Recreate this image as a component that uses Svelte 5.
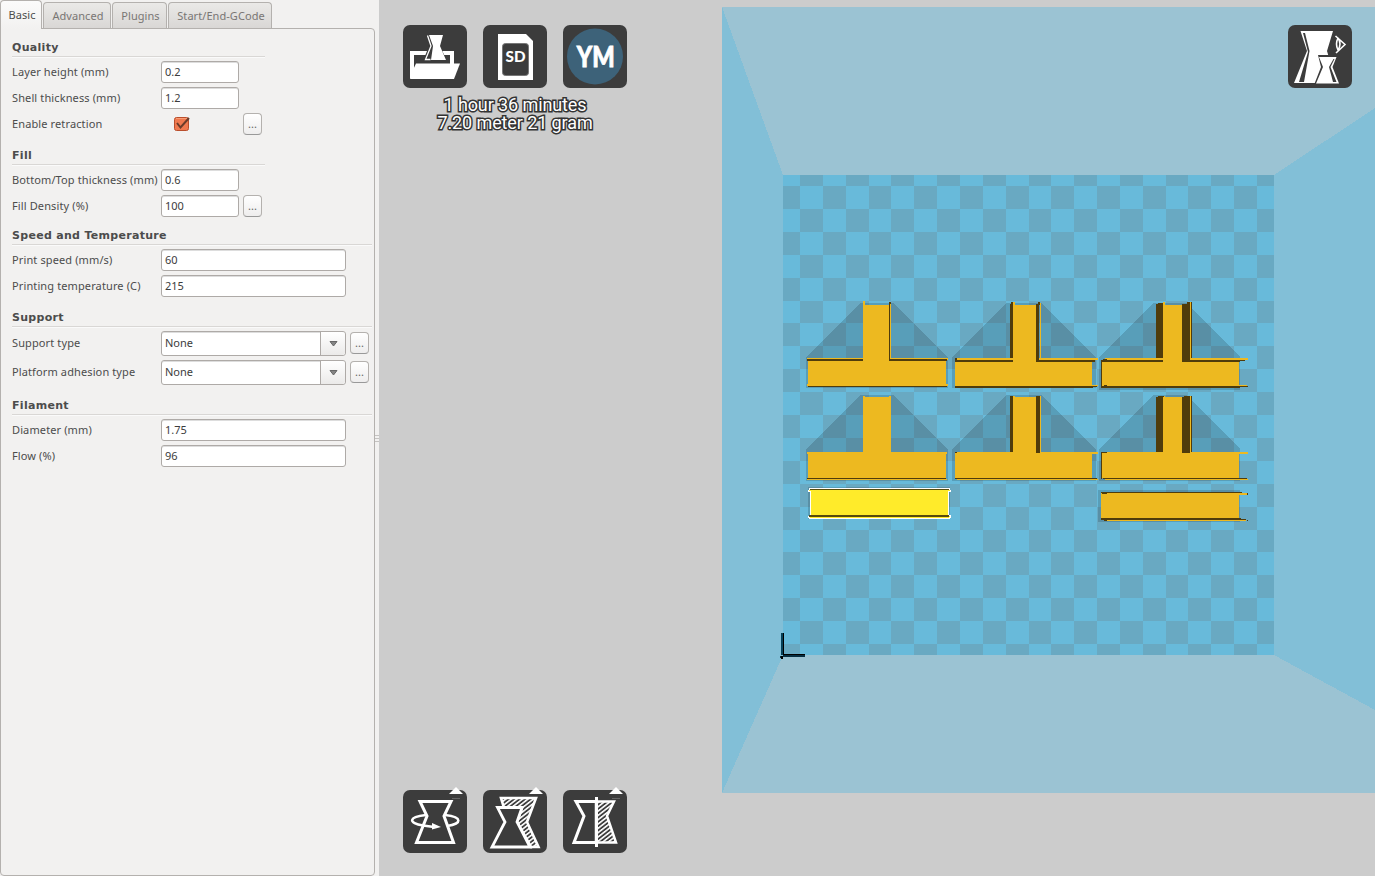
<script>
  const tabs = ['Basic', 'Advanced', 'Plugins', 'Start/End-GCode'];
  const sections = [
    { title: 'Quality', narrow: true, rows: [
      { label: 'Layer height (mm)', value: '0.2', small: true },
      { label: 'Shell thickness (mm)', value: '1.2', small: true },
      { label: 'Enable retraction', check: true, more: true } ] },
    { title: 'Fill', narrow: true, rows: [
      { label: 'Bottom/Top thickness (mm)', value: '0.6', small: true },
      { label: 'Fill Density (%)', value: '100', small: true, more: true } ] },
    { title: 'Speed and Temperature', tight: true, rows: [
      { label: 'Print speed (mm/s)', value: '60' },
      { label: 'Printing temperature (C)', value: '215' } ] },
    { title: 'Support', rows: [
      { label: 'Support type', value: 'None', select: true, more: true },
      { label: 'Platform adhesion type', value: 'None', select: true, more: true } ] },
    { title: 'Filament', rows: [
      { label: 'Diameter (mm)', value: '1.75' },
      { label: 'Flow (%)', value: '96' } ] }
  ];

  // Platform checkerboard: partial cells along every edge
  const xs = [783];
  const ys = [175];
  for (let i = 0; i <= 20; i++) {
    xs.push(Math.round(800 + i * 22.85));
    ys.push(Math.round(186 + i * 22.9));
  }
  xs.push(1274);
  ys.push(655);
  const cells = [];
  for (let r = 0; r < ys.length - 1; r++)
    for (let c = 0; c < xs.length - 1; c++)
      if ((r + c) % 2) cells.push([xs[c], ys[r], xs[c + 1] - xs[c], ys[r + 1] - ys[r]]);

  const O = '#edb920';
  const D = '#503c0b';
  const shadows = [
    '806,357 860,303 893,303 948,357 948,388 806,388',
    '952,357 1006,303 1041,303 1096,357 1096,388 952,388',
    '1099,357 1153,303 1186,303 1240,357 1240,390 1099,390',
    '806,449 860,395 893,395 948,449 948,481 806,481',
    '952,449 1006,395 1041,395 1096,449 1096,481 952,481',
    '1099,449 1153,395 1186,395 1240,449 1240,481 1099,481',
    '1098,490 1240,490 1240,522 1098,522',
    '808,487 950,487 950,519 808,519'
  ];
  const parts = [
    // upper left
    [807,358,141,2,O],[807,359,140,2,D],[808,361,138,25,O],[807,384,141,2,O],[808,386,139,1,D],
    [863,301,2,58,O],[863,305,26,56,O],[865,360,24,2,O],[889,302,1,57,D],[890,302,1,56,D],[890,304,1,54,O],
    // upper middle
    [957,358,141,1,O],[955,358,2,2,D],[957,359,141,1,O],[955,360,140,2,D],[955,362,137,24,O],[957,385,141,1,O],[955,386,138,2,D],[1092,386,5,1,D],
    [1010,304,3,54,D],[1011,302,2,2,D],[1013,302,2,56,O],[1013,305,23,58,O],[1036,304,3,58,D],[1038,302,2,3,D],[1040,303,1,56,O],
    // upper right
    [1105,358,143,2,O],[1103,359,4,1,D],[1101,360,144,1,D],[1101,361,139,1,D],[1101,361,1,26,D],[1102,362,137,24,O],[1104,385,143,1,O],[1104,385,3,1,D],[1101,386,147,1,D],[1101,387,139,1,D],
    [1156,304,7,54,D],[1158,303,6,2,D],[1163,302,2,56,O],[1163,305,19,58,O],[1182,304,8,58,D],[1187,302,3,3,D],[1190,302,1,57,O],[1191,302,1,56,D],[1190,359,1,1,O],
    // lower left
    [807,452,140,2,O],[808,453,138,25,O],[807,478,139,1,D],[807,479,140,1,O],[863,396,2,56,O],[889,396,2,56,O],[863,397,28,57,O],
    // lower middle
    [957,452,141,2,O],[955,453,137,25,O],[955,478,142,1,D],[957,479,141,1,O],[955,452,2,1,D],
    [1010,396,3,56,D],[1013,396,2,56,O],[1013,397,23,57,O],[1036,396,4,57,D],[1040,396,1,56,O],
    // lower right
    [1103,452,145,2,O],[1101,452,1,27,D],[1102,453,137,25,O],[1102,452,5,1,D],[1103,478,144,1,D],[1105,479,143,1,O],
    [1156,397,7,55,D],[1158,396,6,2,D],[1163,397,20,56,O],[1164,396,1,2,O],[1182,397,8,56,D],[1184,396,6,2,D],[1190,396,1,56,O],[1191,396,1,56,D],
    // bottom right bar
    [1101,492,141,1,D],[1101,493,138,26,O],[1103,493,144,2,O],[1102,493,5,1,D],[1101,518,140,2,D],[1107,520,139,1,O],[1104,520,3,1,D],[1239,519,7,1,D],
    [1247,493,1,2,D],[1247,520,1,1,D]
  ];
</script>

<div class="app">
  <aside>
    <nav>
      {#each tabs as t, i}
        <div class="tab" class:active={i === 0} class:t2={i === 2} class:t3={i === 3}>{t}</div>
      {/each}
    </nav>
    <div class="panel">
      {#each sections as s}
        <section class:narrow={s.narrow} class:tight={s.tight}>
          <h2>{s.title}</h2>
          {#each s.rows as r}
            <div class="row" class:tall={r.select}>
              <span class="label">{r.label}</span>
              {#if r.check}
                <span class="checkcell">
                  <svg width="18" height="18" viewBox="0 0 18 18">
                    <rect x="2.5" y="2.5" width="14" height="13" rx="2" fill="#f0794f" stroke="#b94e2c" />
                    <path d="M4 3.5h11" stroke="#f99d76" />
                    <path d="M5 8l3.5 4.5L17 3" fill="none" stroke="#6b3c2a" stroke-width="2" />
                  </svg>
                </span>
              {:else if r.select}
                <span class="select"><span>{r.value}</span><i><svg width="9" height="7" viewBox="0 0 9 7"><path d="M1 1.5h7L4.5 6z" fill="#858585" stroke="#666" /></svg></i></span>
              {:else}
                <span class="input" class:small={r.small}>{r.value}</span>
              {/if}
              {#if r.more}<span class="more">...</span>{/if}
            </div>
          {/each}
        </section>
      {/each}
    </div>
  </aside>
  <div class="sash"><i></i><i></i><i></i></div>

  <main>
    <svg class="scene" width="996" height="876" viewBox="379 0 996 876" shape-rendering="crispEdges">
      <rect x="722" y="7" width="653" height="786" fill="#82bfd7" />
      <path d="M722 7H1375V108L1274 175H783z" fill="#9bc3d3" />
      <path d="M722 793H1375V710L1274 655H783z" fill="#9bc3d3" />
      <rect x="783" y="175" width="491" height="480" fill="#68bada" />
      {#each cells as c}<rect x={c[0]} y={c[1]} width={c[2]} height={c[3]} fill="#69a9c2" />{/each}
      {#each shadows as p}<polygon points={p} fill="#000" opacity=".15" />{/each}
      {#each parts as p}<rect x={p[0]} y={p[1]} width={p[2]} height={p[3]} fill={p[4]} />{/each}
      <path d="M809 488H950V490H951V492H949V515H951V518H950V519H809V518H808V516H810V492H808V490H809z" fill="#fff" />
      <path d="M810 489H949V490H950V491H948V516H950V517H949V518H810V517H809V516H811V491H809V490H810z" fill="#ffeb2a" />
      <path d="M810 489h139v1H810zM809 515h140v2H809z" fill="#584b0c" />
      <path d="M781 633h3v22h-3z" fill="#064058" /><path d="M783 633h1v21h21v1h-22zM781 656h2v3h-2z" fill="#000" />
      <path d="M783 655h22v2h-22zM780 656h1v2h-1z" fill="#062d40" />
    </svg>

    <div class="top">
      <div class="left">
        <div class="tools">
          <svg class="tool" viewBox="0 0 64 63">
            <path d="M7 26H51V40H47V30H11V53H7z" fill="#fff" />
            <path d="M23 9H41L37 21L44 36H20L26 21z" fill="#3c3c3c" />
            <path d="M26 10H40L37 21L43 35H28L30 21z" fill="#fff" />
            <path d="M24.5 10.5l3.5 10.5-5.500 13.500h5" fill="none" stroke="#fff" stroke-width="1.3" />
            <path d="M13 38.500H57L51 54H7L10 45z" fill="#fff" />
          </svg>
          <svg class="tool" viewBox="0 0 64 63">
            <path d="M15 9H43L50 16V55H15z" fill="#fff" />
            <rect x="19.5" y="18.500" width="26" height="32" rx="3" fill="#3c3c3c" stroke="#777" />
            <text x="32.5" y="37" text-anchor="middle" font-family="Lato, sans-serif" font-weight="900" font-size="15.5" textLength="20" lengthAdjust="spacingAndGlyphs" fill="#fff">SD</text>
          </svg>
          <svg class="tool" viewBox="0 0 64 63">
            <circle cx="32" cy="31.500" r="28" fill="#3d6279" />
            <text x="32.7" y="42" text-anchor="middle" font-family="Lato, sans-serif" font-weight="900" font-size="27.5" textLength="38" lengthAdjust="spacingAndGlyphs" fill="#fff" stroke="#fff" stroke-width=".8">YM</text>
          </svg>
        </div>
        <div class="info"><div>1 hour 36 minutes</div><div>7.20 meter 21 gram</div></div>
      </div>
      <svg class="tool" viewBox="0 0 64 63">
        <path d="M12.500 6H45L39 26 40.500 31H47L51 58H6L19 26z" fill="#fff" />
        <path d="M15 8H17L21.500 26 16 57H11L20 27z" fill="#3c3c3c" />
        <path d="M20 9L23 26 18 56" fill="none" stroke="#fff" stroke-width="1" />
        <path d="M30 30H53V60H26L33 42z" fill="#3c3c3c" />
        <path d="M31 32H48.500L44.500 42 51 58.500H28L35 42z" fill="#fff" />
        <path d="M45.500 34H46.500L42.500 42 48.500 57H45L41 42z" fill="#3c3c3c" />
        <path d="M47.500 11L57 19.500 48 28M50 13q4 6 0 12q-3-6 0-12" fill="none" stroke="#fff" stroke-width="1.600" />
      </svg>
    </div>

    <div class="tools bottom">
      <svg class="tool" viewBox="0 0 64 63">
        <path d="M17 11.5H48L41 26 50.5 52.500H13.5L24 26z" fill="none" stroke="#fff" stroke-width="3" />
        <path d="M23 25C5 27 5 33 20 35.500l11 1.500M42 25C60 27 59 34 44 36" fill="none" stroke="#fff" stroke-width="2.5" />
        <path d="M29 33l9 4-9 2.500z" fill="#fff" />
        <path d="M46 4L53 -3 60 4z" fill="#fff" /><path d="M49 8.500h8" stroke="#777" stroke-width=".7" />
      </svg>
      <svg class="tool" viewBox="0 0 64 63">
        <defs><pattern id="hatch" width="3.4" height="3.4" patternUnits="userSpaceOnUse" patternTransform="rotate(-38)"><rect width="4" height="4" fill="#3c3c3c" /><rect width="4" height="1.600" fill="#fff" /></pattern></defs>
        <path d="M18 8H53L44 32 55.500 57H48L34 32 39 18H21z" fill="url(#hatch)" stroke="#fff" stroke-width="2.600" />
        <path d="M14.5 17.500H39L34 32 47 57H9L22 32z" fill="#3c3c3c" stroke="#fff" stroke-width="2.800" />
        <path d="M46 4L53 -3 60 4z" fill="#fff" />
      </svg>
      <svg class="tool" viewBox="0 0 64 63">
        <path d="M33 11.5H51L44 26 53 52.500H33z" fill="url(#hatch)" stroke="#fff" stroke-width="2.5" />
        <path d="M33 11.5H13L21 26 11 52.500H33" fill="none" stroke="#fff" stroke-width="3" />
        <path d="M33.5 7V57" stroke="#fff" stroke-width="3" />
        <path d="M46 4L53 -3 60 4z" fill="#fff" /><path d="M49 8.500h8" stroke="#777" stroke-width=".7" />
      </svg>
    </div>
  </main>
</div>

<style>
  :global(body) { margin: 0; }
  * { box-sizing: border-box; }
  .app { display: flex; width: 1375px; height: 876px; overflow: hidden; background: #ccc; font: 11px/16px "Noto Sans", sans-serif; color: #4c4c4c; }
  aside { width: 375px; height: 876px; background: #f2f1f0; display: flex; flex-direction: column; }
  nav { display: flex; height: 28px; align-items: flex-end; gap: 1px; }
  .tab { height: 26px; border: 1px solid #b4b1ae; border-bottom: 0; border-radius: 4px 4px 0 0; background: linear-gradient(#eae9e7, #d9d7d5); color: #797674; padding: 5px 0 0 2px; text-align: center; width: 68px; white-space: nowrap; letter-spacing: .06px; }
  .tab.active { width: 42px; height: 29px; margin-bottom: -1px; background: linear-gradient(#fbfbfb, #f2f1f0); color: #4c4c4c; z-index: 1; padding-top: 6px; }
  .tab.t2 { width: 55px; }
  .tab.t3 { width: 104px; }
  .panel { flex: 1; border: 1px solid #b4b1ae; border-radius: 0 4px 4px 4px; padding: 0 2px 0 11px; }
  h2 { margin: 10px 0 2px; padding-top: 1px; height: 18px; border-bottom: 1px solid #d9d7d5; box-shadow: 0 1px #fafafa; font: bold 11px/16px "DejaVu Sans", sans-serif; letter-spacing: .3px; }
  .tight h2 { margin-top: 8px; }
  .narrow h2 { width: 253px; }
  .row { display: flex; height: 26px; align-items: center; }
  .row.tall { height: 29px; }
  .label { width: 149px; white-space: nowrap; letter-spacing: .12px; }
  .input { width: 185px; height: 22px; border: 1px solid #aeaaa7; border-radius: 3px; background: #fff; color: #3c3c3c; box-shadow: inset 0 1px #ddd; padding: 2px 3px; }
  .input.small { width: 78px; }
  .checkcell { width: 78px; height: 18px; padding-left: 11px; }
  .more { width: 19px; height: 22px; margin-left: 4px; border: 1px solid #b4b1ae; border-bottom-color: #999; border-radius: 4px; background: linear-gradient(#fff, #eeeded); text-align: center; line-height: 19px; color: #666; }
  .tall .label, .tall .more { position: relative; top: -1px; }
  .tall .more { top: -1px; }
  .select { width: 185px; height: 25px; border: 1px solid #aeaaa7; border-radius: 3px; display: flex; background: #fff; color: #3c3c3c; box-shadow: inset 0 1px #ddd; }
  .select span { flex: 1; padding: 3px; }
  .select i { width: 25px; border-left: 1px solid #aeaaa7; background: linear-gradient(#fff, #ebeae9); display: flex; align-items: center; justify-content: center; border-radius: 0 3px 3px 0; }
  .sash { width: 4px; background: #f2f1f0; display: flex; flex-direction: column; justify-content: center; gap: 2px; }
  .sash i { height: 1px; background: #c5c3c1; }
  main { width: 996px; height: 876px; position: relative; display: flex; flex-direction: column; justify-content: space-between; padding: 25px 23px 23px 24px; }
  .scene { position: absolute; inset: 0; }
  .top { position: relative; display: flex; justify-content: space-between; align-items: flex-start; }
  .tools { display: flex; gap: 16px; }
  .bottom { position: relative; }
  .tool { display: block; width: 64px; height: 63px; background: #3c3c3c; border-radius: 7px; overflow: visible; }
  .info { margin-top: 8px; text-align: center; font: 18px/18px Roboto, sans-serif; color: #fff; -webkit-text-stroke: 3px #333; paint-order: stroke fill; letter-spacing: -.1px; }
</style>
